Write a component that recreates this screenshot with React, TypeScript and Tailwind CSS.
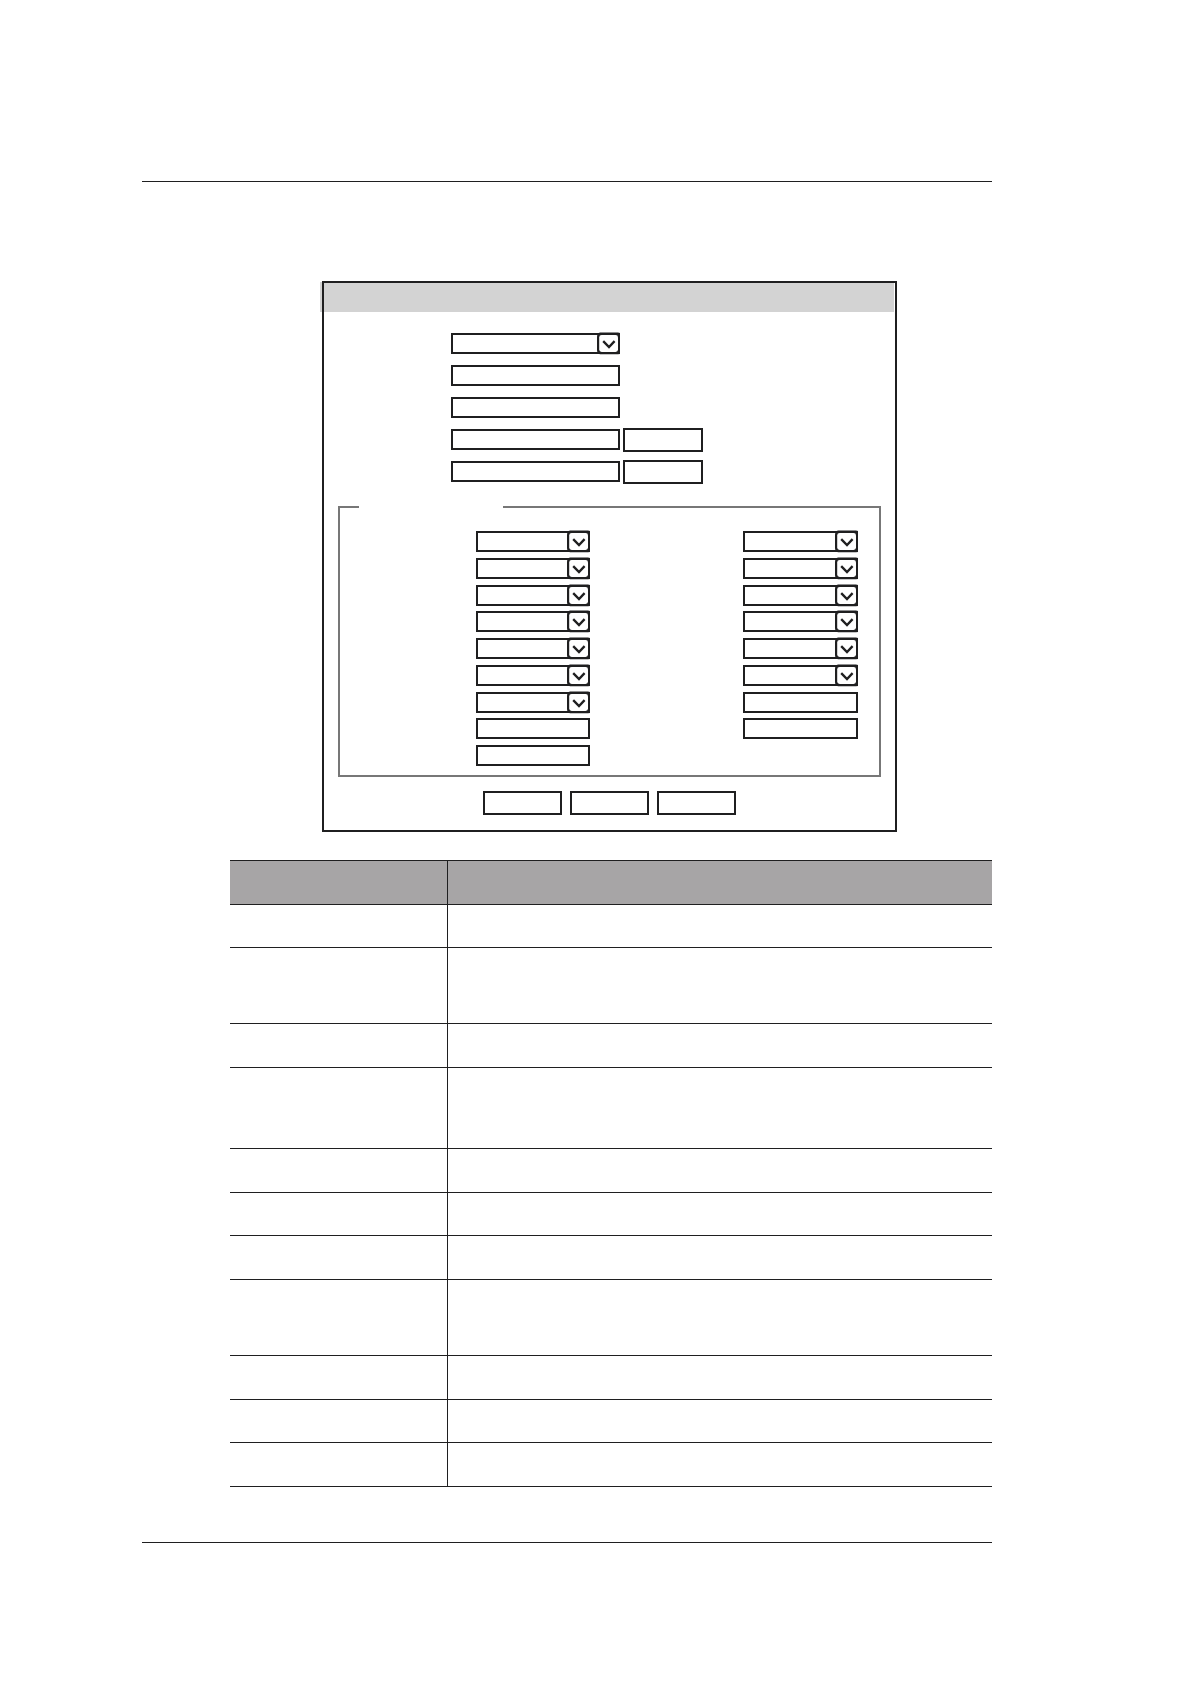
interface FieldProps {
    label: string;
    className?: string;
}

interface FormField {
    label: string;
    kind: 'select' | 'text';
}

const topFields = [
    { label: 'Field 1', kind: 'select', button: false },
    { label: 'Field 2', kind: 'text', button: false },
    { label: 'Field 3', kind: 'text', button: false },
    { label: 'Field 4', kind: 'text', button: true },
    { label: 'Field 5', kind: 'text', button: true },
];

// row by row: left field, then right field
const groupFields: FormField[] = [
    { label: 'Left 1', kind: 'select' },
    { label: 'Right 1', kind: 'select' },
    { label: 'Left 2', kind: 'select' },
    { label: 'Right 2', kind: 'select' },
    { label: 'Left 3', kind: 'select' },
    { label: 'Right 3', kind: 'select' },
    { label: 'Left 4', kind: 'select' },
    { label: 'Right 4', kind: 'select' },
    { label: 'Left 5', kind: 'select' },
    { label: 'Right 5', kind: 'select' },
    { label: 'Left 6', kind: 'select' },
    { label: 'Right 6', kind: 'select' },
    { label: 'Left 7', kind: 'select' },
    { label: 'Right 7', kind: 'text' },
    { label: 'Left 8', kind: 'text' },
    { label: 'Right 8', kind: 'text' },
    { label: 'Left 9', kind: 'text' },
];

const rowHeights = [
    'h-[43px]', 'h-[76px]', 'h-[44px]', 'h-[81px]', 'h-[44px]', 'h-[43px]',
    'h-[44px]', 'h-[76px]', 'h-[44px]', 'h-[43px]', 'h-[44px]',
];

function TextField({ label, className = '' }: FieldProps) {
    return <input type="text" aria-label={label} className={`block h-[21px] border-2 border-[#1f1f20] bg-white px-1 text-xs ${className}`} />;
}

function SelectField({ label, className = '' }: FieldProps) {
    return (
        <div className={`relative h-[21px] ${className}`}>
            <select aria-label={label} className="block h-full w-full appearance-none border-2 border-[#1f1f20] bg-white px-1 text-xs">
                <option value=""></option>
            </select>
            <svg className="pointer-events-none absolute top-0 right-0 h-[21px] w-[23px] overflow-visible" viewBox="0 0 23 21" fill="none" aria-hidden="true">
                <path d="M3 -.4H21L23 0V21L21 21.3H3Q0 20.5 0 17V4Q0 0 3 -.4Z" fill="#1f1f20" />
                <rect x="2.2" y="2" width="18.8" height="17" rx="2.4" fill="white" />
                <path d="M6.2 8.1L12 14.1L17.6 8.1" stroke="#1f1f20" strokeWidth="2.3" />
            </svg>
        </div>
    );
}

function BoxButton({ label, className = '' }: FieldProps) {
    return <button type="button" aria-label={label} className={`h-6 border-2 border-[#1f1f20] bg-white ${className}`} />;
}

function SettingsDialog() {
    return (
        <form className="relative mr-[95px] ml-[180px] border-2 border-[#1f1f20] bg-white pb-[15px]">
            <span className="absolute -top-px -left-1 h-[30px] w-0.5 bg-[#d3d3d3]" />
            <div className="mr-px h-[29px] bg-[#d3d3d3]" />

            <div className="mt-5 flex flex-col gap-2 pl-[127px]">
                {topFields.map((field) => (
                    <div key={field.label} className="flex h-6 items-start gap-[3px]">
                        {field.kind === 'select'
                            ? <SelectField label={field.label} className="mt-px w-[169px]" />
                            : <TextField label={field.label} className="mt-px w-[169px]" />}
                        {field.button && <BoxButton label={`${field.label} action`} className="w-20" />}
                    </div>
                ))}
            </div>

            <fieldset aria-label="Options" className="mx-3.5 mt-[22px] border-2 border-[#777777] pt-[21px] pr-[21px] pb-[9px] pl-[136px]">
                <legend className="-ml-[117px] h-0.5 w-36" />
                <div className="mt-0.5 grid h-[235px] grid-cols-[114px_115px] content-between justify-between">
                    {groupFields.map((field) => (
                        field.kind === 'select'
                            ? <SelectField key={field.label} label={field.label} className="w-full" />
                            : <TextField key={field.label} label={field.label} className="w-full" />
                    ))}
                </div>
            </fieldset>

            <div className="mt-3.5 flex justify-center gap-2">
                <BoxButton label="Button 1" className="w-[79px]" />
                <BoxButton label="Button 2" className="w-[79px]" />
                <BoxButton label="Button 3" className="w-[79px]" />
            </div>
        </form>
    );
}

function DescriptionTable() {
    return (
        <div className="mt-7 pl-[88px]">
            <table className="w-full table-fixed border-separate border-spacing-0 border-t border-[#1f1f20]">
                <thead>
                    <tr className="bg-[#a7a5a6]">
                        <th scope="col" className="h-[44px] w-[218px] border-r border-b border-[#1f1f20] p-0" />
                        <th scope="col" className="border-b border-[#1f1f20] p-0" />
                    </tr>
                </thead>
                <tbody>
                    {rowHeights.map((height, index) => (
                        <tr key={index}>
                            <td className={`border-r border-b border-[#1f1f20] p-0 ${height}`} />
                            <td className="border-b border-[#1f1f20] p-0" />
                        </tr>
                    ))}
                </tbody>
            </table>
        </div>
    );
}

export default function App() {
    return (
        <main className="min-h-screen bg-white pt-[181px] pr-[199px] pb-12 pl-[142px] font-['Liberation_Sans',sans-serif]">
            <hr className="border-t border-[#1f1f20]" />
            <div className="mt-[99px]">
                <SettingsDialog />
            </div>
            <DescriptionTable />
            <hr className="mt-[55px] border-t border-[#1f1f20]" />
        </main>
    );
}
